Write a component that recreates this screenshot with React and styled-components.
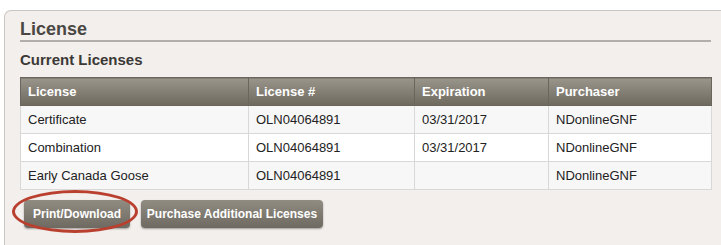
import React from "react";
import styled, { createGlobalStyle } from "styled-components";

const Global = createGlobalStyle`
  body {
    margin: 0;
    background: #fff;
    font-family: "Liberation Sans", Arial, sans-serif;
    overflow: hidden;
  }
`;

const Panel = styled.section`
  margin: 10px 0 0 4px;
  width: 740px;
  height: 240px;
  box-sizing: border-box;
  background: #f3efec;
  border: 1px solid #c9c6c3;
  border-right: none;
  border-bottom: none;
  border-radius: 7px 0 0 0;
  padding: 7px 0 0 15px;
`;

const Title = styled.h1`
  width: 691px;
  margin: 0;
  font-size: 18px;
  font-weight: bold;
  color: #4a4744;
  line-height: 22px;
  border-bottom: 2px solid #b1aeab;
`;

const SubTitle = styled.h2`
  margin: 9px 0 0;
  font-size: 15px;
  font-weight: bold;
  color: #3b3936;
  line-height: 18px;
`;

const Table = styled.table`
  margin-top: 8px;
  width: 691px;
  border-collapse: collapse;
  font-size: 13px;
  table-layout: fixed;
`;

const Th = styled.th`
  width: ${(p) => p.$w}px;
  height: 28px;
  padding: 0 7px;
  text-align: left;
  font-weight: bold;
  color: #fff;
  background: linear-gradient(#9a958b, #6d695f);
  border: 1px solid #6a665d;
  border-left-color: ${(p) => (p.$first ? "#6a665d" : "#a7a296")};
  box-sizing: border-box;
`;

const Tr = styled.tr`
  background: ${(p) => (p.$alt ? "#ffffff" : "#f7f7f7")};
`;

const Td = styled.td`
  height: 28px;
  padding: 0 7px;
  color: #222;
  border: 1px solid #d9d8d6;
  box-sizing: border-box;
`;

const Actions = styled.div`
  display: flex;
  gap: 11px;
  margin: 10px 0 0 4px;
`;

const Button = styled.button`
  position: relative;
  width: ${(p) => p.$w}px;
  height: 28px;
  border: none;
  border-radius: 4px;
  background: linear-gradient(#918c82, #6e6a61);
  box-shadow: 0 1px 2px rgba(0, 0, 0, 0.35);
  color: #fff;
  font-family: "Liberation Sans", Arial, sans-serif;
  font-weight: bold;
  font-size: 12px;
  padding: 0;
  cursor: pointer;
`;

const Circle = styled.span`
  position: absolute;
  left: -12px;
  top: -10px;
  width: 126px;
  height: 43px;
  border: 3px solid #b9402f;
  border-radius: 50%;
  box-sizing: border-box;
  pointer-events: none;
`;

const cols = [
  { label: "License", w: 228 },
  { label: "License #", w: 166 },
  { label: "Expiration", w: 134 },
  { label: "Purchaser", w: 163 },
];

const rows = [
  ["Certificate", "OLN04064891", "03/31/2017", "NDonlineGNF"],
  ["Combination", "OLN04064891", "03/31/2017", "NDonlineGNF"],
  ["Early Canada Goose", "OLN04064891", "", "NDonlineGNF"],
];

export default function App() {
  return (
    <>
      <Global />
      <Panel>
        <Title>License</Title>
        <SubTitle>Current Licenses</SubTitle>
        <Table>
          <thead>
            <tr>
              {cols.map((c, i) => (
                <Th key={c.label} $w={c.w} $first={i === 0}>
                  {c.label}
                </Th>
              ))}
            </tr>
          </thead>
          <tbody>
            {rows.map((r, i) => (
              <Tr key={i} $alt={i % 2 === 1}>
                {r.map((v, j) => (
                  <Td key={j}>{v}</Td>
                ))}
              </Tr>
            ))}
          </tbody>
        </Table>
        <Actions>
          <Button $w={106}>
            Print/Download
            <Circle />
          </Button>
          <Button $w={182}>Purchase Additional Licenses</Button>
        </Actions>
      </Panel>
    </>
  );
}
